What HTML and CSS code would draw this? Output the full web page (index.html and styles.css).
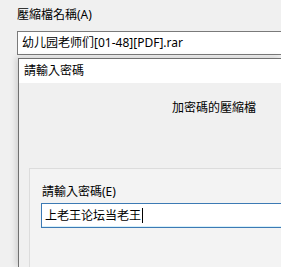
FILE: index.html
```html
<!DOCTYPE html>
<html lang="zh-Hant">
<head>
  <meta charset="UTF-8" />
  <meta name="viewport" content="width=device-width, initial-scale=1.0"/>
  <title>請輸入密碼</title>
  <link rel="stylesheet" href="styles.css">
</head>
<body>

  <!-- 底層視窗：壓縮檔名稱 -->
  <div class="archive">
    <div class="label">壓縮檔名稱(A)</div>
    <div class="field">幼儿园老师们[01-48][PDF].rar</div>
  </div>

  <!-- 密碼對話框 -->
  <div class="dialog">
    <div class="titlebar">請輸入密碼</div>
    <div class="dialog-body">
      <div class="subtitle">加密碼的壓縮檔</div>
      <div class="panel">
        <div class="label">請輸入密碼(E)</div>
        <div class="field focus">上老王论坛当老王<span class="caret"></span></div>
      </div>
    </div>
  </div>

</body>
</html>
```

FILE: styles.css
```css
* { box-sizing: border-box; }

body {
  margin: 0;
  height: 267px;
  overflow: hidden;
  display: flex;
  flex-direction: column;
  background: #f0f0f0;
  color: #000;
  font-family: "Noto Sans", "Noto Sans CJK TC", sans-serif;
  font-size: 12px;
}

.label {
  line-height: 16px;
  white-space: nowrap;
}

/* 輸入框右側延伸到畫面外，所以不畫右邊框 */
.field {
  height: 24px;
  line-height: 22px;
  padding-left: 4px;
  background: #fff;
  border: 1px solid #7a7a7a;
  border-right: 0;
  white-space: nowrap;
  overflow: hidden;
}

.archive {
  padding: 7px 0 0 17px;
}

.archive .field {
  margin-top: 8px;
}

.dialog {
  flex: 1;
  display: flex;
  flex-direction: column;
  margin: 3px 0 0 18px;
  border-top: 1px solid #707070;
  border-left: 1px solid #707070;
  background: #f0f0f0;
  box-shadow: -2px -1px 6px rgba(0,0,0,0.14);
}

.titlebar {
  height: 24px;
  line-height: 24px;
  padding-left: 5px;
  background: #fff;
}

.dialog-body {
  flex: 1;
  display: flex;
  flex-direction: column;
  padding-top: 17px;
}

.subtitle {
  padding-left: 153px;
  line-height: 16px;
  white-space: nowrap;
}

.panel {
  flex: 1;
  margin: 52px 0 0 10px;
  padding: 15px 0 0 11px;
  border-top: 1px solid #dcdcdc;
  border-left: 1px solid #dcdcdc;
  background: #f3f3f3;
}

.panel .label {
  padding-left: 1px;
}

.field.focus {
  margin-top: 3px;
  height: 25px;
  line-height: 23px;
  padding-left: 3px;
  border-color: #3c7ab4;
  box-shadow: inset 0 -1px 0 #d6f0fb;
}

.caret {
  display: inline-block;
  width: 1px;
  height: 15px;
  margin-left: 1px;
  vertical-align: -3px;
  background: #000;
}
```
